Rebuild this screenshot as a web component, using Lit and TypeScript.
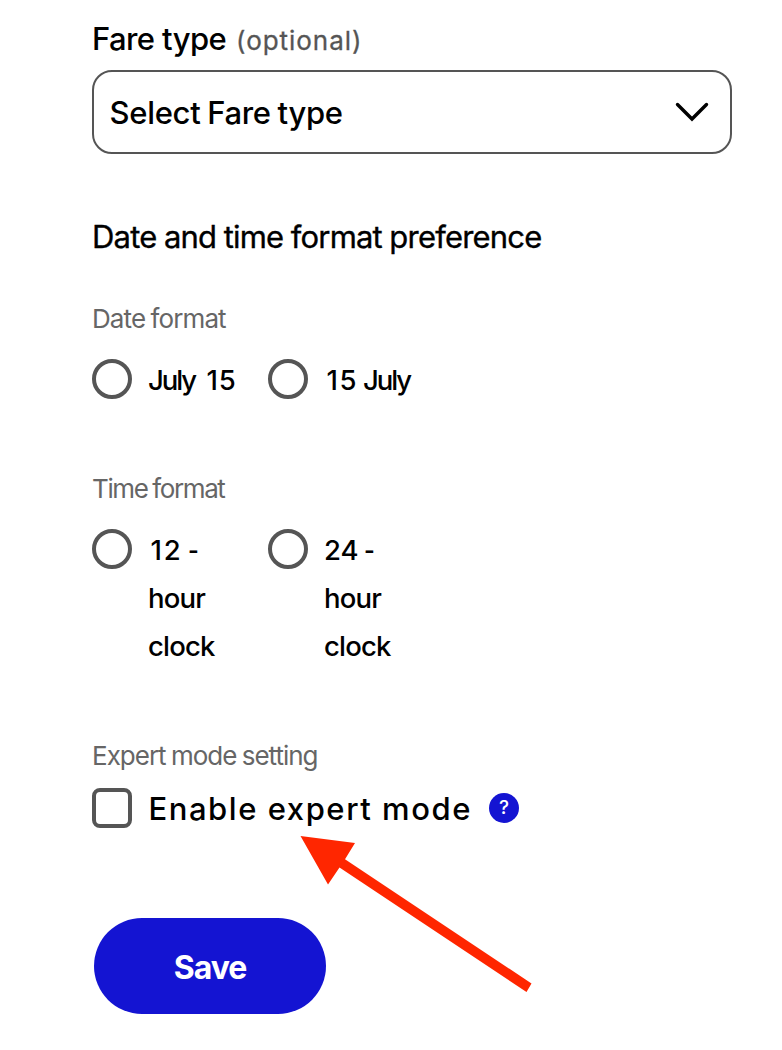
import { LitElement, html, css } from "lit";
import { customElement } from "lit/decorators.js";

@customElement("radio-option")
class RadioOption extends LitElement {
  static styles = css`
    :host { display: flex; gap: 16px; width: 144px; margin-right: 32px; }
    .dot { box-sizing: border-box; flex: none; width: 40px; height: 40px; border: 4px solid #555; border-radius: 50%; }
    .text { margin-top: -3px; font-size: 27.5px; line-height: 48.2px; font-weight: 500; letter-spacing: -0.8px; white-space: nowrap; color: #000; }
  `;
  render() {
    return html`<span class="dot"></span><span class="text"><slot></slot></span>`;
  }
}

@customElement("app-root")
class AppRoot extends LitElement {
  static styles = css`
    :host { display: block; position: relative; box-sizing: border-box; width: 782px; height: 1050px; padding: 19px 50px 0 92px; overflow: hidden; background: #fff; color: #000; font-family: Inter, "Liberation Sans", sans-serif; }
    .label { display: flex; height: 40px; line-height: 40px; font-size: 31px; font-weight: 500; white-space: nowrap; gap: 10px; }
    .fare { letter-spacing: -0.6px; }
    .optional { font-size: 26px; font-weight: 400; color: #555; line-height: 43px; letter-spacing: 0.95px; -webkit-text-stroke: 0.3px #555; }
    .select { box-sizing: border-box; height: 84px; margin-top: 11px; padding: 0 21px 0 15.5px; border: 2px solid #555; border-radius: 20px; display: flex; align-items: center; justify-content: space-between; font-size: 31px; font-weight: 500; white-space: nowrap; }
    .value { letter-spacing: -0.3px; word-spacing: -1.2px; }
    .heading { margin: 62px 0 0; height: 40px; line-height: 41px; font-size: 31px; font-weight: 400; letter-spacing: -0.8px; word-spacing: -0.5px; white-space: nowrap; -webkit-text-stroke: 0.35px #000; }
    .caption { height: 32px; line-height: 33px; font-size: 26px; font-weight: 400; color: #666; letter-spacing: -0.9px; word-spacing: -1px; white-space: nowrap; }
    .date { margin-top: 46px; }
    .time { margin-top: 89px; letter-spacing: -1.4px; }
    .expert { margin-top: 68px; letter-spacing: -1px; }
    .options { display: flex; margin-top: 25px; }
    .date-options { height: 24px; }
    .month { letter-spacing: -2.1px; }
    .day { letter-spacing: 1px; }
    .after { margin-left: 5px; }
    .day-first { margin-left: 2.5px; letter-spacing: 1.5px; }
    .second { margin-left: -1.5px; }
    .twelve { margin-left: 2.5px; letter-spacing: 1.8px; }
    .twenty-four { letter-spacing: 0; }
    .dash { display: inline-block; transform: scaleX(0.85); transform-origin: left; margin-left: -1px; }
    .check { display: flex; height: 40px; margin-top: 17px; align-items: center; white-space: nowrap; }
    .box { box-sizing: border-box; width: 40px; height: 40px; border: 4px solid #555; border-radius: 8px; }
    .enable { margin-left: 16.500px; width: 340.500px; font-size: 31px; line-height: 42px; padding-top: 2px; font-weight: 500; letter-spacing: 1.55px; }
    .help { width: 30px; height: 30px; border-radius: 50%; background: #1414d2; color: #fff; font-size: 19px; font-weight: 500; line-height: 30px; text-align: center; }
    .save { display: block; margin: 90px 0 0 2px; width: 232px; height: 96px; padding: 3px 0 0; border: 0; border-radius: 48px; background: #1414d2; color: #fff; font: 700 32px Inter, sans-serif; letter-spacing: -1px; }
    .arrow { position: absolute; left: 300px; top: 836px; }
  `;
  render() {
    return html`
      <div class="label"><span class="fare">Fare type</span><span class="optional">(optional)</span></div>
      <div class="select">
        <span class="value">Select Fare type</span>
        <svg width="34" height="20" viewBox="0 0 34 20"><path d="M2.500 2.500L17 17L31.500 2.500" fill="none" stroke="#000" stroke-width="3.4" stroke-linecap="round" stroke-linejoin="miter"/></svg>
      </div>
      <h2 class="heading">Date and time format preference</h2>
      <div class="caption date">Date format</div>
      <div class="options date-options"><radio-option><span class="month">July</span> <span class="day after">15</span></radio-option><radio-option><span class="day-first">15</span> <span class="month second">July</span></radio-option></div>
      <div class="caption time">Time format</div>
      <div class="options"><radio-option><span class="twelve">12</span> <span class="dash">-</span><br>hour<br>clock</radio-option><radio-option><span class="twenty-four">24</span> <span class="dash">-</span><br>hour<br>clock</radio-option></div>
      <div class="caption expert">Expert mode setting</div>
      <div class="check"><span class="box"></span><span class="enable">Enable expert mode</span><span class="help">?</span></div>
      <button class="save">Save</button>
      <svg class="arrow" width="234" height="158" viewBox="0 0 234 158"><path d="M.5 0L55 7L45 23.200L231.500 147.500L226.500 156L39.500 31.500L28 48.500Z" fill="#ff2600"/></svg>
    `;
  }
}
